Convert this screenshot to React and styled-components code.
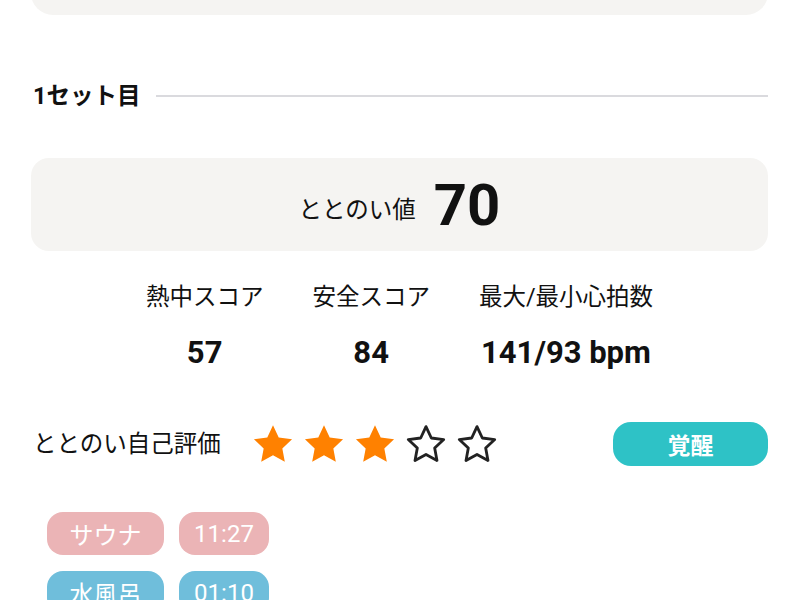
import styled, { createGlobalStyle } from "styled-components";

const GlobalStyle = createGlobalStyle`
  html {
    overflow: hidden;
  }
  body {
    margin: 0;
    padding: 0;
    background: #ffffff;
    font-family: Roboto, "Noto Sans CJK JP", sans-serif;
    color: #111111;
  }
`;

const Page = styled.div`
  width: 800px;
  box-sizing: border-box;
  padding: 1px 32px 0 31px;
`;

const PrevCard = styled.div`
  margin-top: -42px;
  height: 56px;
  background: #f5f4f2;
  border-radius: 22px;
`;

const SectionHead = styled.div`
  display: flex;
  align-items: center;
  gap: 16px;
  margin-top: 66px;
  height: 30px;
  padding-left: 2px;
`;

const SectionTitle = styled.h2`
  margin: 0;
  font-size: 23.5px;
  font-weight: 700;
  line-height: 30px;
  white-space: nowrap;
`;

const Rule = styled.div`
  flex: 1;
  height: 2px;
  background: #dadade;
`;

const ScoreCard = styled.div`
  margin-top: 47px;
  height: 93px;
  background: #f5f4f2;
  border-radius: 18px;
  display: flex;
  align-items: center;
  justify-content: center;
  gap: 18px;
`;

const ScoreLabel = styled.span`
  font-size: 23.5px;
  line-height: 30px;
  margin-top: 10px;
`;

const ScoreValue = styled.span`
  font-size: 58px;
  font-weight: 700;
  line-height: 60px;
`;

const Stats = styled.div`
  display: flex;
  justify-content: center;
  gap: 49px;
  margin-top: 31px;
`;

const Stat = styled.div`
  display: flex;
  flex-direction: column;
  align-items: center;
  gap: 23px;
`;

const StatLabel = styled.span`
  font-size: 23.5px;
  line-height: 30px;
  white-space: nowrap;
`;

const StatValue = styled.span`
  font-size: 31px;
  font-weight: 700;
  line-height: 36px;
  white-space: nowrap;
`;

const RatingRow = styled.div`
  display: flex;
  align-items: center;
  margin-top: 51px;
  padding-left: 2px;
`;

const RatingLabel = styled.span`
  font-size: 23.5px;
  line-height: 30px;
  white-space: nowrap;
`;

const Stars = styled.div`
  display: flex;
  gap: 11px;
  margin-left: 32px;
`;

const Mood = styled.div`
  margin-left: auto;
  width: 155px;
  height: 44px;
  border-radius: 18px;
  background: #2ec2c6;
  color: #ffffff;
  font-size: 23px;
  font-weight: 700;
  display: flex;
  align-items: center;
  justify-content: center;
`;

const Tags = styled.div`
  display: flex;
  flex-direction: column;
  gap: 16px;
  margin-top: 46px;
  padding-left: 16px;
`;

const TagRow = styled.div`
  display: flex;
  gap: 15px;
`;

const Tag = styled.div`
  height: 43px;
  width: ${(p) => p.$w}px;
  border-radius: 16px;
  background: ${(p) => p.$color};
  color: #ffffff;
  font-size: 24px;
  display: flex;
  align-items: center;
  justify-content: center;
`;

const STAR = "12,2.2 15.0,8.6 22,9.5 16.9,14.3 18.2,21.3 12,17.9 5.8,21.3 7.1,14.3 2,9.5 9.0,8.6";

function Star({ filled }) {
  return (
    <svg width="40" height="40" viewBox="1.5 1.5 21 21">
      {filled ? (
        <polygon points={STAR} fill="#ff8100" />
      ) : (
        <polygon
          points={STAR}
          fill="none"
          stroke="#222222"
          strokeWidth="1.6"
          strokeLinejoin="round"
          transform="translate(12 12) scale(0.93) translate(-12 -12)"
        />
      )}
    </svg>
  );
}

const sets = [
  { name: "サウナ", time: "11:27", color: "#ebb4b6" },
  { name: "水風呂", time: "01:10", color: "#6fbedb" },
];

export default function App() {
  const rating = 3;
  return (
    <Page>
      <GlobalStyle />
      <PrevCard />
      <SectionHead>
        <SectionTitle>1セット目</SectionTitle>
        <Rule />
      </SectionHead>
      <ScoreCard>
        <ScoreLabel>ととのい値</ScoreLabel>
        <ScoreValue>70</ScoreValue>
      </ScoreCard>
      <Stats>
        <Stat>
          <StatLabel>熱中スコア</StatLabel>
          <StatValue>57</StatValue>
        </Stat>
        <Stat>
          <StatLabel>安全スコア</StatLabel>
          <StatValue>84</StatValue>
        </Stat>
        <Stat>
          <StatLabel>最大/最小心拍数</StatLabel>
          <StatValue>141/93 bpm</StatValue>
        </Stat>
      </Stats>
      <RatingRow>
        <RatingLabel>ととのい自己評価</RatingLabel>
        <Stars>
          {[1, 2, 3, 4, 5].map((i) => (
            <Star key={i} filled={i <= rating} />
          ))}
        </Stars>
        <Mood>覚醒</Mood>
      </RatingRow>
      <Tags>
        {sets.map((s) => (
          <TagRow key={s.name}>
            <Tag $color={s.color} $w={117}>{s.name}</Tag>
            <Tag $color={s.color} $w={90}>{s.time}</Tag>
          </TagRow>
        ))}
      </Tags>
    </Page>
  );
}
